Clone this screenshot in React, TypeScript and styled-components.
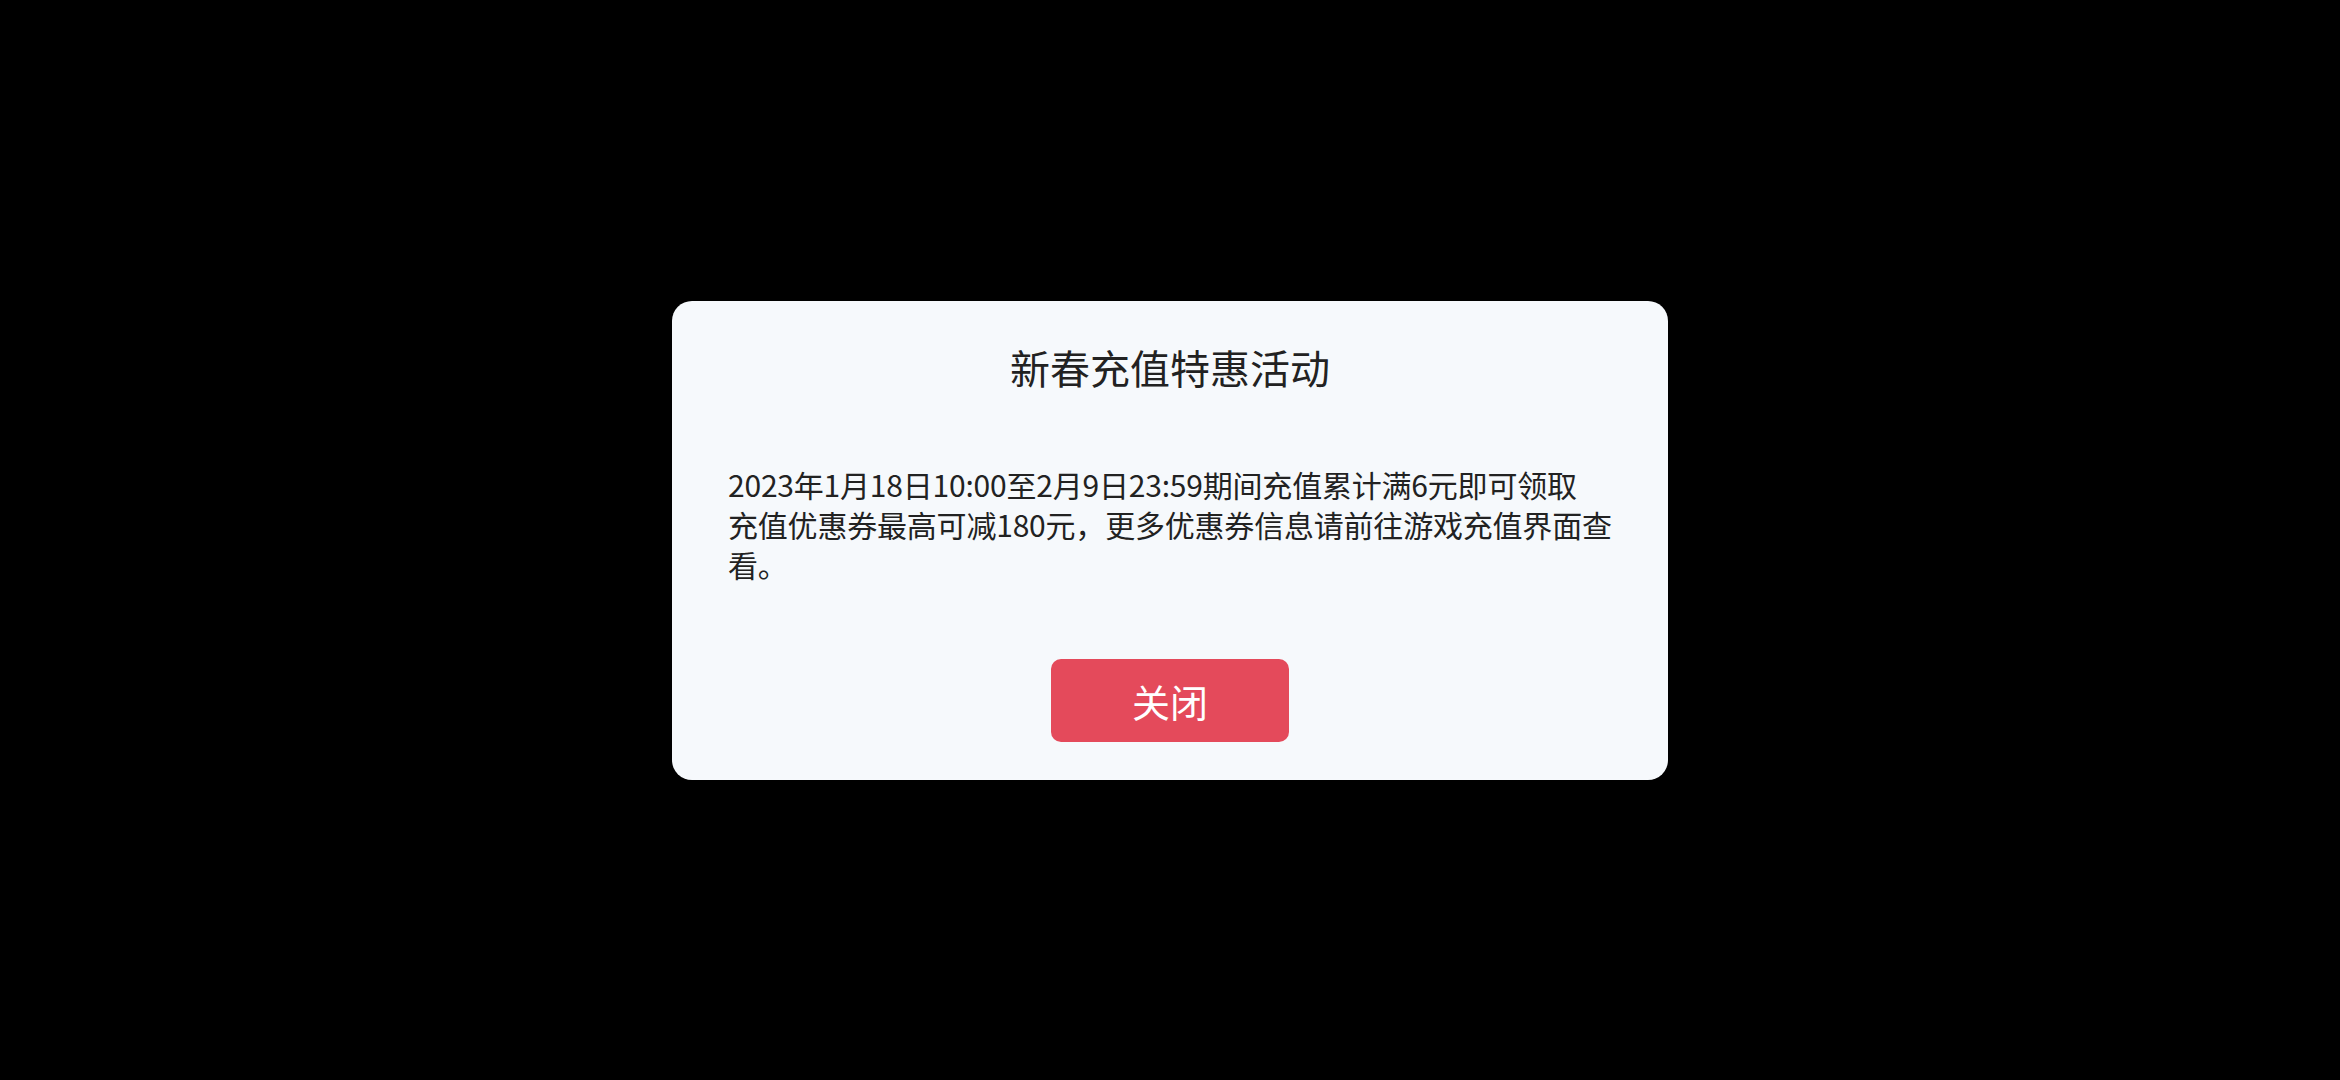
import React from 'react';
import styled, { createGlobalStyle } from 'styled-components';

const GlobalStyle = createGlobalStyle`
    html, body {
        margin: 0;
        padding: 0;
        background: #000;
    }
    body {
        font-family: "Noto Sans CJK SC", "Noto Sans", sans-serif;
    }
`;

const Screen = styled.div`
    width: 2340px;
    height: 1080px;
    display: flex;
    align-items: center;
    justify-content: center;
    background: #000;
`;

const Dialog = styled.div`
    width: 996px;
    box-sizing: border-box;
    padding: 38px 56px;
    display: flex;
    flex-direction: column;
    align-items: center;
    background: #f6f9fc;
    border-radius: 20px;
`;

const Title = styled.h1`
    margin: 0;
    font-size: 40px;
    font-weight: 400;
    line-height: 56px;
    color: #222;
`;

const Content = styled.p`
    align-self: stretch;
    margin: 69px 0 0;
    font-size: 30px;
    line-height: 40px;
    letter-spacing: -0.2px;
    color: #222;
    text-align: left;
    white-space: nowrap;
`;

const CloseButton = styled.button`
    margin-top: 75px;
    width: 238px;
    height: 83px;
    border: none;
    border-radius: 10px;
    background: #e44a5b;
    color: #fff;
    font-family: inherit;
    font-size: 38px;
    cursor: pointer;
`;

const App: React.FC = () => {
    return (
        <>
            <GlobalStyle />
            <Screen>
                <Dialog>
                    <Title>新春充值特惠活动</Title>
                    <Content>
                        2023年1月18日10:00至2月9日23:59期间充值累计满6元即可领取<br />
                        充值优惠券最高可减180元，更多优惠券信息请前往游戏充值界面查<br />
                        看。
                    </Content>
                    <CloseButton>关闭</CloseButton>
                </Dialog>
            </Screen>
        </>
    );
};

export default App;
